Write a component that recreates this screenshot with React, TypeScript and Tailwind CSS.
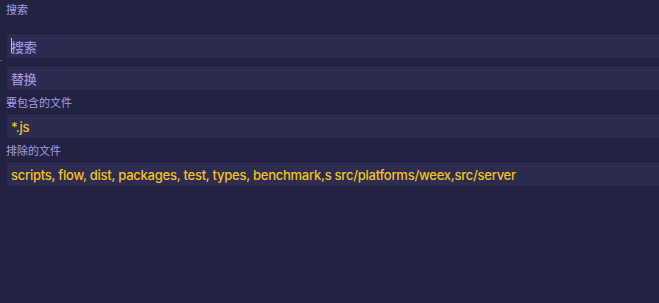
import { useState } from "react";

const font = {
  fontFamily: '"Inter", "Noto Sans CJK SC", sans-serif',
};

function Label({ text }: { text: string }) {
  return (
    <div className="pl-[6px] text-[11px] leading-[14px] text-[#a79fe3]">{text}</div>
  );
}

function Field({
  value,
  placeholder,
  caret,
}: {
  value?: string;
  placeholder?: string;
  caret?: boolean;
}) {
  const [v, setV] = useState(value ?? "");
  return (
    <div className="relative ml-[7px] h-[25px] border-t border-[#1c1b38] bg-[#2c2b50]">
      {caret && (
        <div className="absolute left-[4px] top-[4px] h-[15px] w-[1px] bg-[#f5c518]" />
      )}
      <input
        className="h-full w-full bg-transparent pl-[4px] text-[13px] font-medium tracking-[-0.25px] text-[#f6c51b] outline-none placeholder:text-[#9d94da]"
        style={font}
        value={v}
        placeholder={placeholder}
        onChange={(e) => setV(e.target.value)}
      />
    </div>
  );
}

export default function App() {
  return (
    <div
      className="relative flex h-[303px] w-[659px] flex-col overflow-hidden bg-[#222243] pt-[3px]"
      style={font}
    >
      {/* stray resize handle mark */}
      <div className="absolute left-0 top-[60px] h-[1px] w-[2px] bg-[#5a5a9a]" />
      <Label text="搜索" />
      <div className="mt-[16px]">
        <Field placeholder="搜索" caret />
      </div>
      <div className="mt-[7px]">
        <Field placeholder="替换" />
      </div>
      <div className="mt-[6px]">
        <Label text="要包含的文件" />
      </div>
      <div className="mt-[3px]">
        <Field value="*.js" />
      </div>
      <div className="mt-[6px]">
        <Label text="排除的文件" />
      </div>
      <div className="mt-[3px]">
        <Field value="scripts, flow, dist, packages, test, types, benchmark,s src/platforms/weex,src/server" />
      </div>
    </div>
  );
}
